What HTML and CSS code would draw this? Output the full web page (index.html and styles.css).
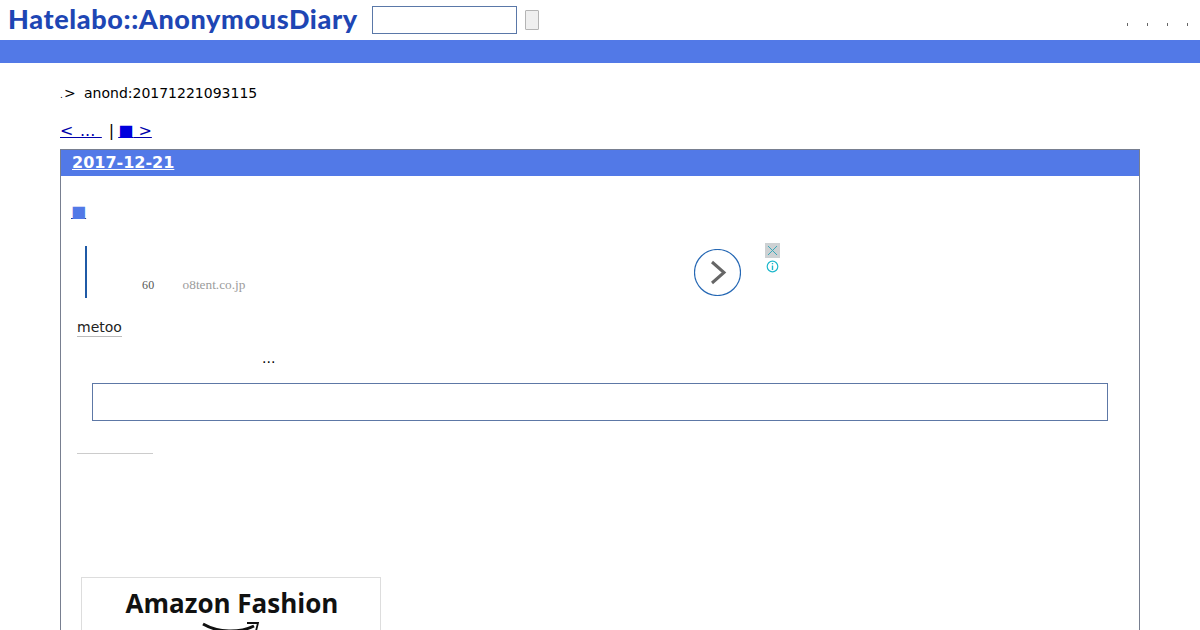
FILE: index.html
```html
<!DOCTYPE html>
<html lang="ja">
<head>
<meta charset="utf-8">
<title>anond:20171221093115</title>
<link rel="stylesheet" href="styles.css">
</head>
<body>
<header class="top">
  <h1 class="logo">Hatelabo::AnonymousDiary</h1>
  <form class="search">
    <span class="search-input"></span>
    <span class="search-btn"></span>
  </form>
  <div class="top-dots"><i></i><i></i><i></i><i></i></div>
</header>
<div class="bar"></div>
<main class="main">
  <p class="crumb"><span class="dot">.</span><span class="gt">&gt;</span><span>anond:20171221093115</span></p>
  <p class="pager"><a class="prev" href="#">&lt; ... </a><span class="sep">|</span><a href="#"><span class="sq">■</span> &gt;</a></p>
  <section class="day">
    <h2 class="day-title"><a href="#">2017-12-21</a></h2>
    <div class="day-body">
      <h3 class="sec"><a href="#">■</a></h3>
      <div class="ad">
        <div class="ad-rule"></div>
        <div class="ad-text"><span class="ad-num">60</span><span class="ad-host">o8tent.co.jp</span></div>
        <span class="ad-arrow">
          <svg width="47" height="47" viewBox="0 0 47 47"><circle cx="23.5" cy="23.5" r="23" fill="#fff" stroke="#2668b4" stroke-width="1.2"/><path d="M18 13 L30 23.5 L18 34" fill="none" stroke="#666" stroke-width="3"/></svg>
        </span>
        <div class="ad-tools">
          <span class="ad-close"><svg width="15" height="15" viewBox="0 0 15 15"><rect width="15" height="15" fill="#cdd1d3"/><path d="M3 3 L12 12 M12 3 L3 12" stroke="#3aa9ba" stroke-width="1"/></svg></span>
          <span class="ad-info"><svg width="13" height="13" viewBox="0 0 13 13"><circle cx="6.5" cy="6.5" r="5.3" fill="none" stroke="#1fb8cc" stroke-width="1.2"/><path d="M6.5 5.5 V10 M6.5 3 V4.3" stroke="#1fb8cc" stroke-width="1.4"/></svg></span>
        </div>
      </div>
      <p class="tag"><span>metoo</span></p>
      <p class="dots">...</p>
      <div class="box"></div>
      <div class="short-rule"></div>
      <div class="amazon">
        <div class="amazon-name">Amazon Fashion</div>
        <svg class="amazon-smile" width="60" height="14" viewBox="0 0 60 14"><path d="M2 2 C18 11 38 11 53 4" fill="none" stroke="#111" stroke-width="3"/><path d="M46 1 L57 1 L55 9" fill="none" stroke="#111" stroke-width="1.8"/></svg>
      </div>
    </div>
  </section>
</main>
</body>
</html>
```

FILE: styles.css
```css
html, body { margin: 0; padding: 0; height: 630px; overflow: hidden; background: #fff; }
body { font-family: "DejaVu Sans", sans-serif; font-size: 14px; color: #000; }
p, h1, h2, h3 { margin: 0; }
a { color: #00a; }

.top { height: 40px; display: flex; align-items: flex-start; box-sizing: border-box; padding-left: 8px; }
.logo { width: 352px; margin-top: 2px; font: 900 27px/34px "Lato", sans-serif; color: #1e46b4; white-space: nowrap; letter-spacing: 0.63px; }
.search { display: flex; align-items: flex-start; margin: 6px 0 0 12px; gap: 8px; }
.search-input { display: block; box-sizing: border-box; width: 145px; height: 28px; border: 1px solid #5a78a8; background: #fff; }
.search-btn { display: block; box-sizing: border-box; width: 14px; height: 20px; margin-top: 4px; border: 1px solid #b4b4b4; border-radius: 1px; background: #efefef; }
.top-dots { margin-left: auto; margin-right: 12px; margin-top: 23px; display: flex; gap: 19px; }
.top-dots i { display: block; width: 1px; height: 3px; background: #666; }

.bar { height: 23px; background: #5279e7; }

.main { padding: 0 60px; }
.crumb { display: flex; align-items: baseline; margin-top: 21px; height: 18px; line-height: 18px; }
.dot { width: 4px; font-size: 9px; }
.gt { width: 20px; }
.pager { position: relative; z-index: 1; margin-top: 19px; height: 19px; font-size: 16px; line-height: 19px; white-space: pre; }
.pager a { color: #00a; }
.prev { word-spacing: 1.5px; }
.sep { margin: 0 4px 0 7px; font-size: 16px; }
.sq { color: #00d; }

.day { margin-top: 9px; box-sizing: border-box; border: 1px solid #787f90; border-bottom: 0; height: 481px; overflow: hidden; }
.day-title { height: 26px; margin: 0; padding-left: 11px; background: #5279e7; font-size: 16px; line-height: 26px; font-weight: 700; }
.day-title a { color: #fff; }
.day-body { padding: 0 31px 0 16px; }
.sec { margin: 26px 0 0 -6px; height: 20px; font-size: 16px; line-height: 20px; font-weight: 400; }
.sec a { color: #5279e7; text-decoration-color: #243e92; }

.ad { position: relative; height: 58px; margin-top: 21px; }
.ad-rule { position: absolute; left: 8px; top: 3px; width: 2px; height: 52px; background: #1f5aa6; }
.ad-text { position: absolute; left: 65px; top: 34px; display: flex; gap: 28px; font: 12px/16px "Liberation Serif", serif; }
.ad-num { color: #555; letter-spacing: 0.3px; }
.ad-host { color: #9c9c9c; font-size: 13.3px; }
.ad-arrow { position: absolute; left: 617px; top: 6px; }
.ad-arrow svg { display: block; }
.ad-tools { position: absolute; left: 688px; top: 0; width: 15px; display: flex; flex-direction: column; align-items: center; gap: 2px; }
.ad-close svg, .ad-info svg { display: block; }

.tag { margin-top: 16px; height: 20px; line-height: 20px; }
.tag span { display: inline-block; line-height: 17px; border-bottom: 1px solid #bbb; color: #222; }
.dots { margin: 12px 0 0 185px; line-height: 18px; height: 18px; }
.box { box-sizing: border-box; height: 38px; margin: 16px 0 0 15px; border: 1px solid #5d78a6; }
.short-rule { width: 76px; height: 1px; margin-top: 32px; background: #ccc; }
.amazon { box-sizing: border-box; width: 300px; height: 90px; margin: 123px 0 0 4px; border: 1px solid #ddd; display: flex; flex-direction: column; align-items: center; }
.amazon-name { font: 700 26px/30px "Open Sans", sans-serif; color: #111; margin: 10px 0 0 2px; white-space: nowrap; }
.amazon-smile { display: block; margin-top: 4px; margin-left: 0; }
```
